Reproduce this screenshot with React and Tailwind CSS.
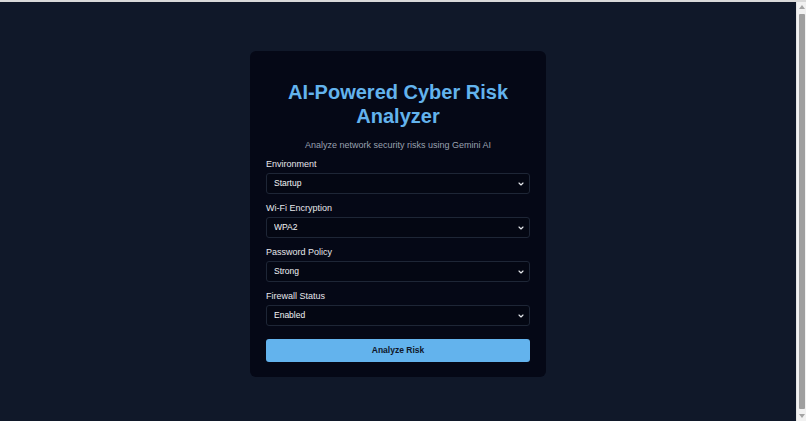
import { ChevronDown } from 'lucide-react';

const fields = [
  { label: 'Environment', value: 'Startup', options: ['Startup', 'Enterprise', 'Home'] },
  { label: 'Wi-Fi Encryption', value: 'WPA2', options: ['WPA2', 'WPA3', 'WEP', 'Open'] },
  { label: 'Password Policy', value: 'Strong', options: ['Strong', 'Medium', 'Weak'] },
  { label: 'Firewall Status', value: 'Enabled', options: ['Enabled', 'Disabled'] },
];

function Field({ label, value, options }) {
  return (
    <div className="flex flex-col gap-[2px]">
      <label className="text-[9px] leading-[13px] text-gray-200">{label}</label>
      <div className="relative">
        <select
          defaultValue={value}
          className="block w-full h-[21px] appearance-none rounded-[3px] border border-[#1e2636] bg-[#040713] pl-[7px] pr-5 text-[8.5px] text-gray-100 outline-none"
        >
          {options.map(o => (
            <option key={o} value={o}>{o}</option>
          ))}
        </select>
        <ChevronDown size={8} strokeWidth={3.5} className="pointer-events-none absolute right-[5px] top-[7px] text-gray-200" />
      </div>
    </div>
  );
}

// fake browser scrollbar, as in the screenshot
function Scrollbar() {
  return (
    <aside className="w-[10px] shrink-0 flex flex-col items-center justify-between bg-[#f1f1f1] border-l border-[#e4e4e4] py-[3px]">
      <span className="block h-0 w-0 border-x-[3px] border-b-[4px] border-x-transparent border-b-[#a3a3a3]" />
      <div className="h-[395px] w-[6px] rounded-[1px] bg-[#9f9f9f]" />
      <span className="block h-0 w-0 border-x-[3px] border-t-[4px] border-x-transparent border-t-[#a3a3a3]" />
    </aside>
  );
}

export default function App() {
  return (
    <div className="h-screen flex flex-col font-['Liberation_Sans',Arial,sans-serif]">
      <div className="h-[2px] shrink-0 bg-[#d9d9d9]" />
      <div className="flex-1 flex min-h-0">
        <main className="flex-1 bg-[#101829] flex items-center justify-center pt-[5px]">
          <div className="w-[296px] rounded-[6px] bg-[#050816] px-4 pt-[29px] pb-[15px]">
            <h1 className="text-center text-[20px] leading-[24px] font-bold text-[#63b3ed]">
              AI-Powered Cyber Risk Analyzer
            </h1>
            <p className="mt-[11px] text-center text-[9px] leading-[13px] text-gray-400">
              Analyze network security risks using Gemini AI
            </p>
            <form className="mt-[6px] flex flex-col gap-[8px]" onSubmit={e => e.preventDefault()}>
              {fields.map(f => (
                <Field key={f.label} {...f} />
              ))}
              <button
                type="submit"
                className="mt-[5px] h-[23px] w-full rounded-[3px] bg-[#63b3ed] text-[8.5px] font-bold text-[#0f172a]"
              >
                Analyze Risk
              </button>
            </form>
          </div>
        </main>
        <Scrollbar />
      </div>
    </div>
  );
}
